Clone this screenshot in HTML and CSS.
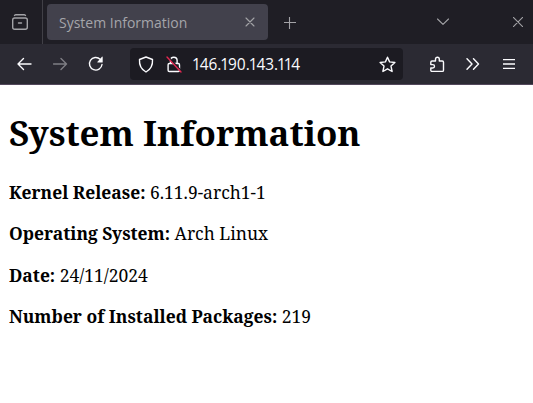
FILE: index.html
```html
<!DOCTYPE html>
<html lang="en">
<head>
<meta charset="utf-8">
<title>System Information</title>
<link rel="stylesheet" href="styles.css">
</head>
<body>
<div class="window">
  <header class="tabbar">
    <div class="view"><svg width="16" height="17" viewBox="0 0 16 17"><path d="M2.500 1.500Q3 .7 4 .7h8q1 0 1.500.8M.7 6Q.7 4 2.700 4h10.600q2 0 2 2v7.300q0 2-2 2H2.700q-2 0-2-2zM6.500 9h3"/></svg></div>
    <div class="tab"><span class="tab-title">System Information</span><svg width="10" height="10" viewBox="0 0 10 10"><path d="M1 1l8 8M9 1L1 9"/></svg></div>
    <svg class="plus" width="12" height="12" viewBox="0 0 12 12"><path d="M5.500 0v12M0 5.500h12"/></svg>
    <svg class="chevron" width="12" height="8" viewBox="0 0 12 8"><path d="M.5 1L6 6.300 11.500 1"/></svg>
    <svg class="close" width="10" height="10" viewBox="0 0 10 10"><path d="M0 0l10 10M10 0L0 10"/></svg>
  </header>
  <nav class="toolbar">
    <svg class="back" width="15" height="14" viewBox="0 0 15 14"><path d="M14 7H1M6.500 1.500L1 7l5.500 5.500"/></svg>
    <svg class="forward" width="15" height="14" viewBox="0 0 15 14"><path d="M.5 7h13M8 1.500L13.500 7 8 12.500"/></svg>
    <svg class="reload" width="16" height="16" viewBox="0 0 16 16"><path d="M12.200 3.300A6.300 6.300 0 1 0 14 8.500"/><path class="solid" d="M14.700 1v5q0 .5-.5.500H9.700q-.8 0-.2-.7L14 .7q.7-.4.700.3z"/></svg>
    <div class="urlbar">
      <svg class="shield" width="16" height="17" viewBox="0 0 16 17"><path d="M8 1L1.500 3.500C1.100 9 3.300 13.400 8 16c4.700-2.600 6.900-7 6.500-12.500z"/></svg>
      <svg class="lock" width="16" height="17" viewBox="0 0 16 17"><path d="M4.500 7V4.500a3.300 3.300 0 0 1 6.600 0V7M3.300 7.500h9q1.200 0 1.200 1.200v5.600q0 1.200-1.200 1.200h-9q-1.200 0-1.200-1.200V8.700q0-1.200 1.200-1.200z"/><path class="cut" d="M2 .5l14 15"/><path class="slash" d="M1 1l14 15"/></svg>
      <span class="url">146.190.143.114</span>
      <svg class="star" width="17" height="17" viewBox="0 0 17 17"><path d="M8.500 1.200l2.100 4.700 5.300.6-3.900 3.600 1.100 5.400-4.600-2.700-4.600 2.700L5 10.100 1.100 6.500l5.300-.6z"/></svg>
    </div>
    <svg class="puzzle" width="15" height="17" viewBox="0 0 15 17"><path d="M2 5h3.500V3.200a1.900 1.900 0 0 1 3.800 0V5h3q1.200 0 1.200 1.200v8q0 1.200-1.200 1.200H2q-1.200 0-1.200-1.200V12h2a1.700 1.700 0 0 0 0-3.400h-2V6.200Q.8 5 2 5z"/></svg>
    <svg class="more" width="14" height="12" viewBox="0 0 14 12"><path d="M1 .7L6 6l-5 5.300M7.500.7l5 5.300-5 5.300"/></svg>
    <svg class="menu" width="12" height="10" viewBox="0 0 12 10"><path d="M0 .5h12M0 5h12M0 9.500h12"/></svg>
  </nav>
  <main>
    <h1>System Information</h1>
    <p><b>Kernel Release:</b> 6.11.9-arch1-1</p>
    <p><b>Operating System:</b> Arch Linux</p>
    <p><b>Date:</b> 24/11/2024</p>
    <p><b>Number of Installed Packages:</b> 219</p>
  </main>
</div>
</body>
</html>
```
FILE: styles.css
```css
* { box-sizing: border-box; }
body { margin: 0; background: #fff; }
svg { display: block; flex: none; fill: none; stroke: #fbfbfe; stroke-width: 1.4; stroke-linecap: round; stroke-linejoin: round; }
.window { width: 533px; height: 403px; overflow: hidden; background: #fff; }
.tabbar { display: flex; align-items: center; height: 44px; background: #1f1e25; }
.tabbar svg { stroke: #a3a3a7; stroke-width: 1.1; }
.tabbar .view svg { stroke-width: 1.4; }
.view { width: 43px; height: 44px; padding: 14px 0 0 12px; border-right: 1px solid #414047; }
.tab { display: flex; align-items: center; justify-content: space-between; width: 221px; height: 36px; margin-left: 4px; padding: 0 13px 0 12px; border-radius: 4px; background: #42414c; color: #a5a5aa; font: 15px "Open Sans", "Noto Sans", sans-serif; white-space: nowrap; }
.tab-title { transform: scaleX(.932); transform-origin: left center; }
.plus { margin: 2px 0 0 16px; }
.chevron { margin-left: 141px; }
.close { margin-left: 64px; }
.toolbar { display: flex; align-items: center; height: 41px; background: #2b2a33; border-bottom: 1px solid #52475b; }
.back { margin-left: 17px; }
.forward { margin-left: 21px; opacity: .4; }
.reload { margin-left: 20px; }
.solid { fill: #fbfbfe; stroke: none; }
.urlbar { display: flex; align-items: center; width: 273px; height: 32px; margin-left: 26px; padding: 0 7px 0 8px; border-radius: 4px; background: #1c1b22; color: #fbfbfe; font: 15.4px "Open Sans", "Noto Sans", sans-serif; font-variant-numeric: proportional-nums; }
.lock { margin-left: 12px; }
.cut { stroke: #1c1b22; }
.slash { stroke: #e22850; }
.url { margin-left: 11px; white-space: nowrap; }
.star { margin-left: auto; }
.puzzle { margin-left: 27px; }
.more { margin-left: 21px; }
.menu { margin-left: 23px; stroke-linecap: butt; }
main { padding: 23px 9px 0; color: #000; font: 17.45px/24px "Noto Serif", "DejaVu Serif", serif; }
h1 { margin: 0 0 22px; font-size: 34.9px; line-height: 50px; font-weight: bold; white-space: nowrap; }
p { margin: 0 0 17.4px; white-space: nowrap; }
```
